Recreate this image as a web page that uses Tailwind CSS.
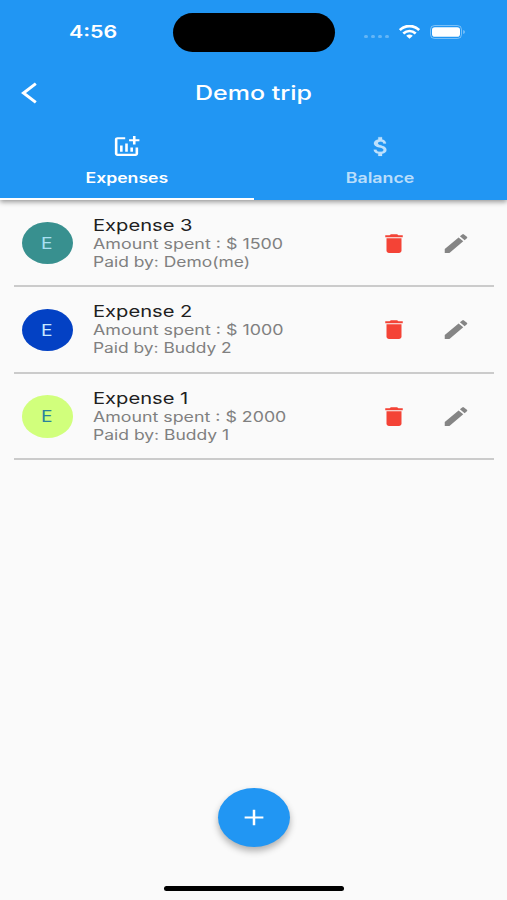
<!DOCTYPE html>
<html lang="en">
<head>
<meta charset="utf-8">
<title>Demo trip</title>
<script src="https://cdn.jsdelivr.net/npm/@tailwindcss/browser@4"></script>
</head>
<body class="h-[900px] w-[507px] overflow-hidden bg-[#fafafa] font-['Inter','Liberation_Sans',sans-serif]">
<div class="flex h-full flex-col">
  <header class="relative z-10 h-[200px] shrink-0 bg-[#2196f3] text-white shadow-[0_2px_5px_rgba(0,0,0,0.4)]">
    <div class="flex h-16 items-center pl-[69px]">
      <div class="w-[104px]"><span class="inline-block origin-left scale-x-[1.26] text-[17px] leading-5 font-semibold">4:56</span></div>
      <div class="h-[39px] w-[162px] rounded-[20px] bg-black"></div>
      <div class="ml-[29px] mt-2 flex gap-[3px]">
        <i class="h-[3px] w-1 rounded-full bg-white/30"></i><i class="h-[3px] w-1 rounded-full bg-white/30"></i><i class="h-[3px] w-1 rounded-full bg-white/30"></i><i class="h-[3px] w-1 rounded-full bg-white/30"></i>
      </div>
      <svg class="ml-[10px] h-[14px] w-[21px]" viewBox="0 0 21 14" fill="none" stroke="white" stroke-width="2.700"><path d="M.8 5C6-.3 15-.3 20.200 5M4.300 8.500C8 5.200 13 5.200 16.700 8.500"/><path d="M7.200 10.800Q10.500 8.300 13.800 10.800L10.500 13.800Z" fill="white" stroke="none"/></svg>
      <svg class="ml-[10px] h-[14px] w-[36px]" viewBox="0 0 36 14"><rect x=".5" y=".5" width="31" height="13" rx="4" fill="none" stroke="white" stroke-opacity=".4"/><rect x="2" y="2.300" width="28" height="9.400" rx="2.800" fill="white"/><path d="M33.300 5v4q1.500-.5 1.500-2t-1.500-2Z" fill="white" fill-opacity=".5"/></svg>
    </div>
    <div class="flex h-[58px] items-center">
      <svg class="ml-5 h-6 w-5" viewBox="0 0 20 24" fill="none" stroke="white" stroke-width="3"><path d="M15.800 2.600 3.500 12l12.300 9.400"/></svg>
      <h1 class="ml-[155px] origin-left scale-x-[1.250] whitespace-nowrap text-[20px] leading-6 font-medium">Demo trip</h1>
    </div>
    <nav class="grid h-[78px] grid-cols-2">
      <div class="flex flex-col items-center border-b-2 border-white pt-[12px]">
        <svg class="h-[25px] w-[31px]" viewBox="0 0 24 24" preserveAspectRatio="none" fill="white"><path d="M22 5v2h-3v3h-2V7h-3V5h3V2h2v3h3zm-3 14H5V5h6V3H5c-1.100 0-2 .9-2 2v14c0 1.100.9 2 2 2h14c1.100 0 2-.9 2-2v-6h-2v6zm-4-6v4h2v-4h-2zm-4 4h2V9h-2v8zm-2 0v-6H7v6h2z"/></svg>
        <span class="mt-[9px] scale-x-[1.260] text-[14px] leading-5 font-semibold">Expenses</span>
      </div>
      <div class="flex flex-col items-center pt-[12px] text-white/70">
        <svg class="mr-[2px] h-[25px] w-[30px]" viewBox="0 0 24 24" preserveAspectRatio="none" fill="currentColor" stroke="currentColor" stroke-width=".2"><path d="M14.120 11.020c-3.010-.78-3.010-1.500-3.010-2.140 0-1 .9-1.680 2.180-1.680 1.540 0 2.100.74 2.150 1.820h2.210c-.07-1.720-1.120-3.300-3.210-3.810V3h-3v2.160c-1.940.42-3.500 1.680-3.500 3.610 0 2.310 1.910 3.460 4.700 4.130 2.500.6 3 1.480 3 2.410 0 .69-.49 1.790-2.700 1.790-2.060 0-2.870-.92-2.980-2.100h-2.200c.12 2.190 1.760 3.420 3.680 3.830V21h3v-2.150c1.950-.37 3.500-1.500 3.500-3.550 0-2.840-2.430-3.810-4.820-4.280z"/></svg>
        <span class="mt-[9px] scale-x-[1.270] text-[14px] leading-5 font-semibold">Balance</span>
      </div>
    </nav>
  </header>
  <main class="flex-1 px-[14px] pr-[13px]">
    <article class="flex h-[87px] items-center border-b-2 border-[#cbcbcb] pl-[7.500px] pt-px">
      <div class="flex h-[42.500px] w-[51.500px] items-center justify-center rounded-[50%] bg-[#38908f] text-[16px] text-[#a8e0f3]"><span class="scale-x-[1.2]">E</span></div>
      <div class="ml-[20px] flex w-[290px] flex-col items-start whitespace-nowrap text-[#808080]">
        <h2 class="origin-left scale-x-[1.220] text-[16.500px] leading-[19px] text-[#202020]">Expense 3</h2>
        <p class="origin-left scale-x-[1.275] text-[14px] leading-[18px]">Amount spent : $ 1500</p>
        <p class="origin-left scale-x-[1.245] text-[14px] leading-[18px]">Paid by: Demo(me)</p>
      </div>
      <svg class="-ml-[4px] h-[25px] w-[30px]" viewBox="0 0 24 24" preserveAspectRatio="none" fill="#f44336"><path d="M6 19c0 1.100.9 2 2 2h8c1.100 0 2-.9 2-2V7H6v12zM19 4h-3.500l-1-1h-5l-1 1H5v2h14V4z"/></svg>
      <svg class="ml-[31.500px] h-[25px] w-[30px]" viewBox="0 0 24 24" preserveAspectRatio="none" fill="#858585"><path d="M3 17.250V21h3.750L17.810 9.940l-3.750-3.750L3 17.250zM20.710 7.040c.39-.39.39-1.020 0-1.410l-2.340-2.340a1 1 0 0 0-1.410 0l-1.830 1.830 3.750 3.750 1.830-1.830z"/></svg>
    </article>
    <article class="flex h-[86.500px] items-center border-b-2 border-[#cbcbcb] pl-[7.500px] pt-px">
      <div class="flex h-[42.500px] w-[51.500px] items-center justify-center rounded-[50%] bg-[#0341c4] text-[16px] text-[#c7e8ff]"><span class="scale-x-[1.2]">E</span></div>
      <div class="ml-[20px] flex w-[290px] flex-col items-start whitespace-nowrap text-[#808080]">
        <h2 class="origin-left scale-x-[1.220] text-[16.500px] leading-[19px] text-[#202020]">Expense 2</h2>
        <p class="origin-left scale-x-[1.275] text-[14px] leading-[18px]">Amount spent : $ 1000</p>
        <p class="origin-left scale-x-[1.240] text-[14px] leading-[18px]">Paid by: Buddy 2</p>
      </div>
      <svg class="-ml-[4px] h-[25px] w-[30px]" viewBox="0 0 24 24" preserveAspectRatio="none" fill="#f44336"><path d="M6 19c0 1.100.9 2 2 2h8c1.100 0 2-.9 2-2V7H6v12zM19 4h-3.500l-1-1h-5l-1 1H5v2h14V4z"/></svg>
      <svg class="ml-[31.500px] h-[25px] w-[30px]" viewBox="0 0 24 24" preserveAspectRatio="none" fill="#858585"><path d="M3 17.250V21h3.750L17.810 9.940l-3.750-3.750L3 17.250zM20.710 7.040c.39-.39.39-1.020 0-1.410l-2.340-2.340a1 1 0 0 0-1.410 0l-1.830 1.830 3.750 3.750 1.830-1.830z"/></svg>
    </article>
    <article class="flex h-[86.500px] items-center border-b-2 border-[#cbcbcb] pl-[7.500px] pt-px">
      <div class="flex h-[42.500px] w-[51.500px] items-center justify-center rounded-[50%] bg-[#d1ff7c] text-[16px] text-[#2a829b]"><span class="scale-x-[1.2]">E</span></div>
      <div class="ml-[20px] flex w-[290px] flex-col items-start whitespace-nowrap text-[#808080]">
        <h2 class="origin-left scale-x-[1.220] text-[16.500px] leading-[19px] text-[#202020]">Expense 1</h2>
        <p class="origin-left scale-x-[1.270] text-[14px] leading-[18px]">Amount spent : $ 2000</p>
        <p class="origin-left scale-x-[1.250] text-[14px] leading-[18px]">Paid by: Buddy 1</p>
      </div>
      <svg class="-ml-[4px] h-[25px] w-[30px]" viewBox="0 0 24 24" preserveAspectRatio="none" fill="#f44336"><path d="M6 19c0 1.100.9 2 2 2h8c1.100 0 2-.9 2-2V7H6v12zM19 4h-3.500l-1-1h-5l-1 1H5v2h14V4z"/></svg>
      <svg class="ml-[31.500px] h-[25px] w-[30px]" viewBox="0 0 24 24" preserveAspectRatio="none" fill="#858585"><path d="M3 17.250V21h3.750L17.810 9.940l-3.750-3.750L3 17.250zM20.710 7.040c.39-.39.39-1.020 0-1.410l-2.340-2.340a1 1 0 0 0-1.410 0l-1.830 1.830 3.750 3.750 1.830-1.830z"/></svg>
    </article>
  </main>
  <footer class="flex h-[112px] shrink-0 flex-col items-center">
    <button class="flex h-[59px] w-[72px] items-center justify-center rounded-[50%] bg-[#2196f3] shadow-[0_4px_7px_rgba(0,0,0,0.3)]" aria-label="Add">
      <svg class="h-[25px] w-[30px]" viewBox="0 0 24 24" preserveAspectRatio="none" fill="white"><path d="M19.500 13H13v6.500h-2V13H4.500v-2H11V4.500h2V11h6.500Z"/></svg>
    </button>
    <div class="mt-[39px] h-[5px] w-[180px] rounded-full bg-black"></div>
  </footer>
</div>
</body>
</html>
